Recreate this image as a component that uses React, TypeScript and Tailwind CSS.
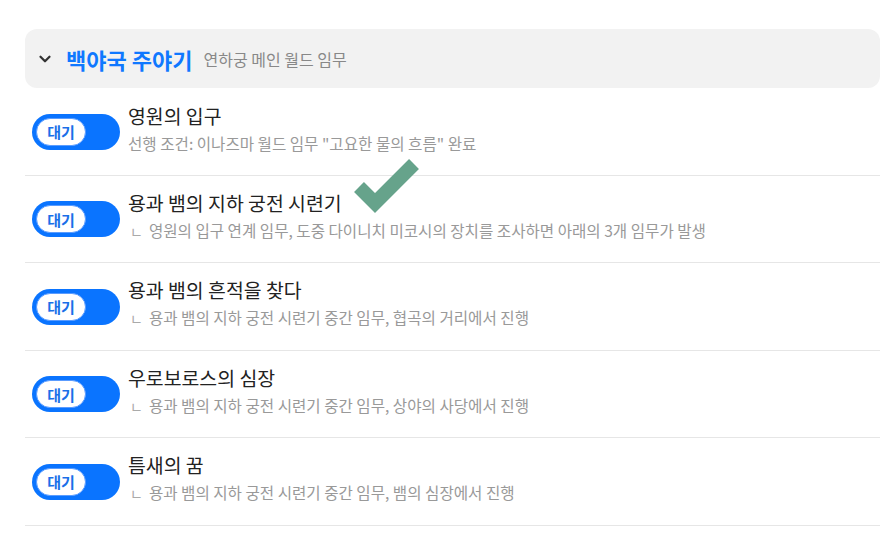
import { ChevronDown } from "lucide-react";

const quests = [
  {
    title: "영원의 입구",
    desc: '선행 조건: 이나즈마 월드 임무 "고요한 물의 흐름" 완료',
    sub: false,
  },
  {
    title: "용과 뱀의 지하 궁전 시련기",
    desc: "영원의 입구 연계 임무, 도중 다이니치 미코시의 장치를 조사하면 아래의 3개 임무가 발생",
    sub: true,
  },
  {
    title: "용과 뱀의 흔적을 찾다",
    desc: "용과 뱀의 지하 궁전 시련기 중간 임무, 협곡의 거리에서 진행",
    sub: true,
  },
  {
    title: "우로보로스의 심장",
    desc: "용과 뱀의 지하 궁전 시련기 중간 임무, 상야의 사당에서 진행",
    sub: true,
  },
  {
    title: "틈새의 꿈",
    desc: "용과 뱀의 지하 궁전 시련기 중간 임무, 뱀의 심장에서 진행",
    sub: true,
  },
];

function Toggle() {
  return (
    <div className="flex h-[36px] w-[88px] shrink-0 items-center rounded-full bg-[#0a74ff] pl-[4px]">
      <div className="flex h-[28px] w-[50px] items-center justify-center rounded-full border border-[#5a9cff] bg-white">
        <span className="text-[15px] font-bold leading-none text-[#1a6fe8]">대기</span>
      </div>
    </div>
  );
}

export default function App() {
  return (
    <div
      className="relative min-h-screen bg-white pl-[25px] pr-[13px] pt-[29px]"
      style={{ fontFamily: '"Noto Sans CJK KR", "Noto Sans", sans-serif' }}
    >
      {/* Section header */}
      <div className="flex h-[59px] items-center rounded-xl bg-[#f2f2f2] pl-[11px]">
        <ChevronDown className="h-[18px] w-[18px] text-[#333]" strokeWidth={3} />
        <span className="ml-[12px] text-[22px] font-bold leading-none text-[#0f78ff]">
          백야국 주야기
        </span>
        <span className="ml-[11px] text-[16px] leading-none text-[#888]">
          연하궁 메인 월드 임무
        </span>
      </div>

      {/* Quest rows */}
      <div>
        {quests.map((q, i) => (
          <div
            key={q.title}
            className={`flex items-center border-b border-[#e6e6e6] pl-[7px] ${
              i % 2 === 0 ? "h-[88px]" : "h-[87px]"
            }`}
          >
            <Toggle />
            <div className="mb-[8px] ml-[8px] flex flex-col gap-[4px]">
              <div className="text-[19.4px] leading-[26px] text-[#222]">{q.title}</div>
              <div className="text-[15.6px] leading-[20px] text-[#999]">
                {q.sub && <span className="ml-[2px] mr-[6px] text-[14px] text-[#aaa]">ㄴ</span>}
                {q.desc}
              </div>
            </div>
          </div>
        ))}
      </div>

      {/* Check mark overlay */}
      <svg
        className="pointer-events-none absolute left-0 top-0"
        width="893"
        height="539"
        viewBox="0 0 893 539"
      >
        <path
          d="M359 187 L375 203 L414 164"
          fill="none"
          stroke="#66a38b"
          strokeWidth="14"
          strokeLinecap="butt"
          strokeLinejoin="miter"
        />
      </svg>
    </div>
  );
}
